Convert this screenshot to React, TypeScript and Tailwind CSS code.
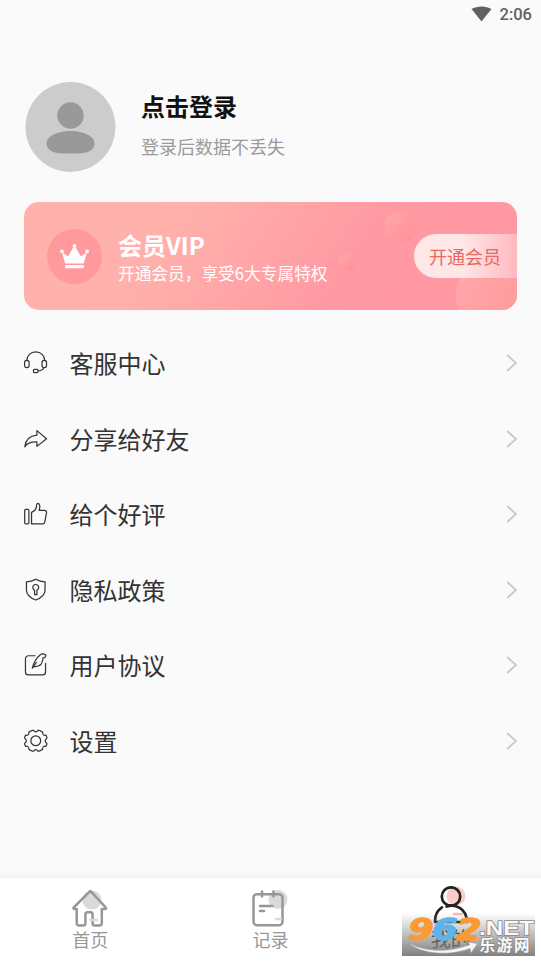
import type { ReactNode } from 'react';

const menuItems: { label: string; icon: ReactNode }[] = [
  {
    label: '客服中心',
    icon: (
      <>
        <path d="M2.800 10.200V10a9.200 9.200 0 0 1 18.400 0v.2" />
        <rect x="0.600" y="9.500" width="4.600" height="7.500" rx="2.200" />
        <rect x="18.400" y="9.500" width="4.600" height="7.500" rx="2.200" />
        <path d="M20.300 17c-.6 1.800-2.600 3-5.800 3.400" />
        <rect x="9.500" y="18.700" width="5" height="3.400" rx="1.600" />
      </>
    ),
  },
  {
    label: '分享给好友',
    icon: <path d="M13.200 3.700 23 12l-9.800 7.800v-4.500C7.800 15 3.600 16.200.8 20.200 1.500 13.500 6 9 13.200 8.300V3.700Z" />,
  },
  {
    label: '给个好评',
    icon: (
      <>
        <rect x="0.700" y="7.500" width="4.300" height="14.800" rx="1.200" />
        <path d="M7.700 22.300V10.600c2.500-1 4.500-2.800 4.900-5.400.3-2 .2-3.800 1.500-3.800 2.400 0 2.500 3.800 1.300 7.200h5.500c1.400 0 2.300.9 2.100 2.200l-1.700 9.400c-.3 1.400-1 2.100-2.300 2.100H7.700Z" />
      </>
    ),
  },
  {
    label: '隐私政策',
    icon: (
      <>
        <path d="M12 1.200c3 1.800 6 2.600 9.500 2.700v8.500c0 4.600-4 7.800-9.500 10.100-5.500-2.300-9.500-5.500-9.500-10.100V3.900C6 3.800 9 3 12 1.200Z" />
        <path d="M10.800 12.400a3 3 0 1 1 2.400 0v4.600h-2.400v-4.600Z" />
      </>
    ),
  },
  {
    label: '用户协议',
    icon: (
      <>
        <path d="M11.800 2.800H4.500A3 3 0 0 0 1.500 5.800v13.500a3 3 0 0 0 3 3h14.500a3 3 0 0 0 3-3v-9.100" />
        <path d="M8.400 15.700C9.800 10 12.500 5 16.700 1.700c1.400-1 3.300-1.200 5.600.4 0 1.300-.4 2.200-1.300 2.700l-1.800.2.200 1.500-1.800 4.900c-2 2.200-4.500 2.600-7.400 2.700" />
        <path d="m8.400 15.700 4.600-6.500" />
      </>
    ),
  },
  {
    label: '设置',
    icon: (
      <>
        <path d="M8.500 1.300h1.300c.5 1.200 1.200 1.700 2.200 1.700s1.700-.5 2.200-1.700h1.300L19 3.200c-.1 1.400.2 2.300.9 2.800s1.500.6 2.500.3l.9 1.900v1.200c-1.200.8-1.700 1.600-1.700 2.600s.5 1.800 1.700 2.600v1.200l-.9 1.900c-1-.3-1.800-.2-2.500.3s-1 1.400-.9 2.800l-3.500 1.900h-1.300c-.5-1.200-1.200-1.700-2.200-1.700s-1.700.5-2.200 1.700H8.500L5 20.800c.1-1.400-.2-2.300-.9-2.800s-1.500-.6-2.500-.3l-.9-1.900v-1.200c1.200-.8 1.700-1.600 1.700-2.600S1.900 10.200.7 9.400V8.200l.9-1.900c1 .3 1.800.2 2.500-.3s1-1.400.9-2.800l3.500-1.900Z" />
        <circle cx="12" cy="12" r="5" />
      </>
    ),
  },
];

function StatusBar() {
  return (
    <header className="flex h-[28px] items-center justify-end gap-[8px] pr-[9px] text-[#616161]">
      <svg width="21" height="16" viewBox="0 0 21 16" fill="currentColor">
        <path d="M10.500 15.500 0.500 3C6 -.5 15 -.5 20.500 3L10.500 15.500Z" />
      </svg>
      <span className="pt-[2px] font-[Roboto,sans-serif] text-[16.500px] leading-none font-medium">2:06</span>
    </header>
  );
}

function Profile() {
  return (
    <section className="flex h-[90px] items-center pl-[25px]">
      <svg width="91" height="91" viewBox="0 0 91 91">
        <circle cx="45.500" cy="45" r="45" fill="#ccc" />
        <circle cx="45.500" cy="33.500" r="13.200" fill="#999" />
        <path d="M45.500 49c13 0 24 5 24 12.500 0 6.500-7 10-16 10h-16c-9 0-16-3.500-16-10C21.500 54 32.500 49 45.500 49Z" fill="#999" />
      </svg>
      <div className="ml-[25px] flex flex-col pb-[7px]">
        <h1 className="text-[24px] leading-[36px] font-bold text-[#111]">点击登录</h1>
        <p className="mt-[9px] text-[18px] leading-[27px] text-[#9b9b9b]">登录后数据不丢失</p>
      </div>
    </section>
  );
}

function VipCard() {
  return (
    <section className="relative mx-[24px] mt-[30px] flex h-[108px] items-center overflow-hidden rounded-[15px] bg-[linear-gradient(125deg,#ffb2ac_12%,#ffb0ab_30%,#ff99a3_66%,#ff98a2)]">
      <svg className="absolute inset-0" width="493" height="108" viewBox="0 0 493 108">
        <defs>
          <linearGradient id="bubble" x1="0" y1="0" x2="1" y2="1">
            <stop stopColor="#ffa9ab" />
            <stop offset="1" stopColor="#ff8e96" />
          </linearGradient>
          <linearGradient id="bigBubble" x1="0" y1="0" x2="1" y2="0.500">
            <stop stopColor="#ffaaac" />
            <stop offset="1" stopColor="#ff9699" />
          </linearGradient>
        </defs>
        <circle cx="376.500" cy="25.500" r="16" fill="url(#bubble)" />
        <circle cx="323" cy="60" r="8.800" fill="url(#bubble)" />
        <circle cx="478" cy="95" r="46" fill="url(#bigBubble)" />
      </svg>
      <div className="relative ml-[23px] flex size-[55px] items-center justify-center rounded-full bg-[#ff999c]">
        <svg width="29" height="25" viewBox="0 0 29 25" fill="white">
          <circle cx="14.500" cy="2" r="1.900" />
          <circle cx="1.900" cy="7.300" r="1.900" />
          <circle cx="27.100" cy="7.300" r="1.900" />
          <path d="m2 8 6 4.500L13.500 3h2L21 12.500 27 8l-3.200 11.500H5.200L2 8ZM5.200 21h18.600v3.200H5.200z" />
        </svg>
      </div>
      <div className="relative ml-[16px] flex flex-col pt-[4px] text-white">
        <h2 className="text-[24px] leading-[28px] font-bold">会员VIP</h2>
        <p className="mt-[1px] text-[16.700px] leading-[26px] whitespace-nowrap">开通会员，享受6大专属特权</p>
      </div>
      <button className="relative ml-auto h-[44px] w-[103px] rounded-l-full bg-[linear-gradient(90deg,#ffe6e7_48%,#ffb9c0)] pl-[15px] text-left text-[18px] text-[#e46b61]">
        开通会员
      </button>
    </section>
  );
}

function MenuList() {
  return (
    <nav className="mt-[15.400px] px-[24px]">
      {menuItems.map((item) => (
        <a key={item.label} className="flex h-[75.500px] items-center text-[#333]">
          <svg width="23.500" height="23.500" viewBox="0 0 24 24" fill="none" stroke="currentColor" strokeWidth="1.250" strokeLinejoin="round">
            {item.icon}
          </svg>
          <span className="ml-[22px] text-[24px] leading-[36px]">{item.label}</span>
          <svg className="ml-auto" width="11" height="18" viewBox="0 0 11 18" fill="none" stroke="#c8c8c8" strokeWidth="1.700">
            <path d="m1.200 1 8.700 8-8.700 8" />
          </svg>
        </a>
      ))}
    </nav>
  );
}

function Watermark() {
  return (
    <svg className="absolute top-[35px] left-[402px] overflow-visible" width="139" height="43" viewBox="0 0 139 43">
      <defs>
        <linearGradient id="shade" x1="0" y1="0" x2="0" y2="1">
          <stop stopColor="#808080" stopOpacity="0" />
          <stop offset="1" stopColor="#808080" />
        </linearGradient>
      </defs>
      <rect width="133" height="43" fill="url(#shade)" />
      <path d="M6 29.500c17 10 42 10 62 2l-3-2.500 10.500 1.500-6.500 9.500-1-4.500C48 43 20 42 6 29.500Z" fill="#f4f4f4" stroke="#999" strokeWidth="0.500" />
      <g fontFamily="DejaVu Sans, sans-serif" fontWeight="700" fontStyle="italic" fontSize="30.500" strokeWidth="1.500" strokeLinejoin="round">
        <text x="6.500" y="26.500" textLength="25" lengthAdjust="spacingAndGlyphs" fill="#fa9a35" stroke="#fa9a35">9</text>
        <text x="30.500" y="26.500" textLength="25" lengthAdjust="spacingAndGlyphs" fill="#5fb3e8" stroke="#5fb3e8">6</text>
        <text x="54.500" y="26.500" textLength="25" lengthAdjust="spacingAndGlyphs" fill="#fa9a35" stroke="#fa9a35">2</text>
      </g>
      <g fill="#fafafa" stroke="#8a8a8a" strokeWidth="1.500" paintOrder="stroke" fontWeight="700">
        <text x="77" y="22" textLength="55" lengthAdjust="spacingAndGlyphs" fontFamily="Liberation Sans, sans-serif" fontSize="20">.NET</text>
        <text x="77.500" y="38" textLength="50" fontFamily="Noto Sans CJK SC, sans-serif" fontSize="15.500">乐游网</text>
      </g>
    </svg>
  );
}

function TabBar() {
  return (
    <footer className="relative flex h-[85px] border-t border-[#f1f1f1] bg-white text-[#979797] shadow-[0_-1px_3px_rgba(0,0,0,0.05)]">
      <div className="flex flex-1 flex-col items-center pt-[12px]">
        <svg width="36" height="37" viewBox="0 0 36 37" fill="none" stroke="currentColor" strokeWidth="2.500" strokeLinejoin="round">
          <circle cx="20" cy="10" r="9.500" fill="#dadada" stroke="none" />
          <path d="M17.800 1.300 1.700 17.500q-.8 1.500 1 1.600h2V33q0 2.500 2.400 2.500h4.300q2 0 2-2v-9q0-2.300 2-2.300h3.200q2 0 2 2.300v9q0 2 2 2h4.800q2.400 0 2.400-2.500V19.100h3q1.800-.1 1-1.600L18.800 1.300q-.5-.4-1 0Z" />
          <path d="M17 30h9" stroke="#dadada" />
        </svg>
        <span className="text-[18px] leading-[24px]">首页</span>
      </div>
      <div className="flex flex-1 flex-col items-center pt-[12px]">
        <svg width="36" height="37" viewBox="0 0 36 37" fill="none" stroke="currentColor" strokeWidth="2.500" strokeLinecap="round">
          <circle cx="26" cy="9.500" r="9.500" fill="#dadada" stroke="none" />
          <rect x="1.500" y="4.200" width="29" height="31" rx="3.500" />
          <path d="M10 1.500v5M21.500 1.500v5M8 16h12.500M8 21h4" />
          <path d="M24 29h5" stroke="#dadada" />
        </svg>
        <span className="text-[18px] leading-[24px]">记录</span>
      </div>
      <div className="flex flex-1 flex-col items-center pt-[8px] text-[#222]">
        <svg width="36" height="40" viewBox="0 0 36 40" fill="none" stroke="currentColor" strokeWidth="2.700" strokeLinecap="round">
          <circle cx="23" cy="10" r="9.500" fill="#ffcbca" stroke="none" />
          <circle cx="18" cy="10.500" r="9.200" />
          <path d="M2 35c0-6 2-10.500 7-13.700M13.500 20.500c9-3 19.500 2 20.500 14.500v1H2" />
          <path d="M21 28h8" stroke="#ffb7b7" />
        </svg>
        <span className="text-[20px] leading-[26px]">我的</span>
      </div>
      <Watermark />
    </footer>
  );
}

export default function App() {
  return (
    <main className="flex h-[962px] w-[541px] flex-col overflow-hidden bg-[#fafafa] font-['Noto_Sans_CJK_SC',sans-serif]">
      <StatusBar />
      <div className="flex-1 pt-[54px]">
        <Profile />
        <VipCard />
        <MenuList />
      </div>
      <TabBar />
    </main>
  );
}
